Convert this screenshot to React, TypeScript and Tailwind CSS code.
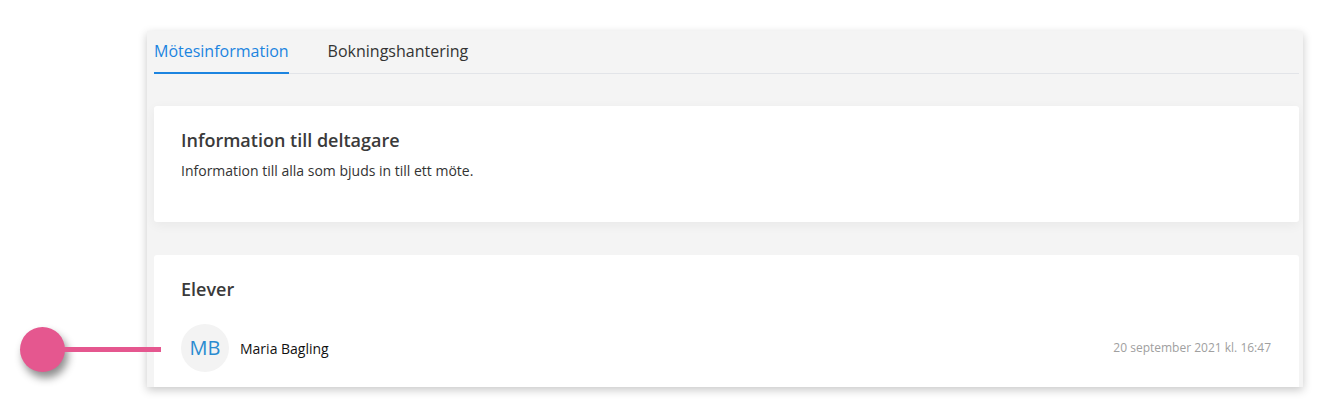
import React from "react";

const tabs = [
  { id: 1, name: "Mötesinformation", active: true },
  { id: 2, name: "Bokningshantering", active: false },
];

const students = [
  { id: 1, initials: "MB", name: "Maria Bagling", date: "20 september 2021 kl. 16:47" },
];

export default function App() {
  return (
    <div className="relative w-[1320px] h-[414px] bg-white overflow-hidden font-['Open_Sans',sans-serif]">
      {/* annotation marker */}
      <div className="absolute left-[20px] top-[327px] w-[45px] h-[45px] rounded-full bg-[#e5578f] shadow-[3px_6px_8px_rgba(0,0,0,0.45)]" />
      <div className="absolute left-[60px] top-[347px] w-[101px] h-[5px] bg-[#e5578f]" />

      <div className="ml-[147px] mt-[31px] w-[1156px] h-[356px] bg-[#f4f4f4] rounded-tr-[3px] shadow-[0_3px_10px_rgba(0,0,0,0.22)] overflow-hidden pl-[7px] pr-[4px]">
        <div className="flex gap-[39px] border-b border-[#e2e4e8] h-[43px]">
          {tabs.map((tab) => (
            <div
              key={tab.id}
              className={
                tab.active
                  ? "pt-[8px] text-[16px] leading-[24px] text-[#1c84e0] border-b-2 border-[#1c84e0] -mb-px"
                  : "pt-[8px] text-[16px] leading-[24px] text-[#333]"
              }
            >
              {tab.name}
            </div>
          ))}
        </div>

        <div className="mt-[32px] bg-white rounded-[3px] h-[116px] pt-[21px] pl-[27px] shadow-[0_3px_12px_rgba(0,0,0,0.05)]">
          <h2 className="text-[18px] leading-[26px] font-semibold text-[#3a3a3a]">Information till deltagare</h2>
          <p className="mt-[8px] text-[14px] leading-[20px] text-[#333]">Information till alla som bjuds in till ett möte.</p>
        </div>

        <div className="mt-[33px] bg-white rounded-t-[3px] h-[140px] pt-[21px] pl-[27px] pr-[28px]">
          <h2 className="text-[18px] leading-[26px] font-semibold text-[#3a3a3a]">Elever</h2>
          <div className="mt-[22px]">
            {students.map((s) => (
              <div key={s.id} className="flex items-center">
                <div className="w-[48px] h-[48px] rounded-full bg-[#f3f3f3] flex items-center justify-center text-[20px] text-[#2a8bd0]">
                  {s.initials}
                </div>
                <span className="ml-[11px] text-[14px] text-[#111]">{s.name}</span>
                <span className="ml-auto text-[12px] text-[#a0a0a0]">{s.date}</span>
              </div>
            ))}
          </div>
        </div>
      </div>
    </div>
  );
}
